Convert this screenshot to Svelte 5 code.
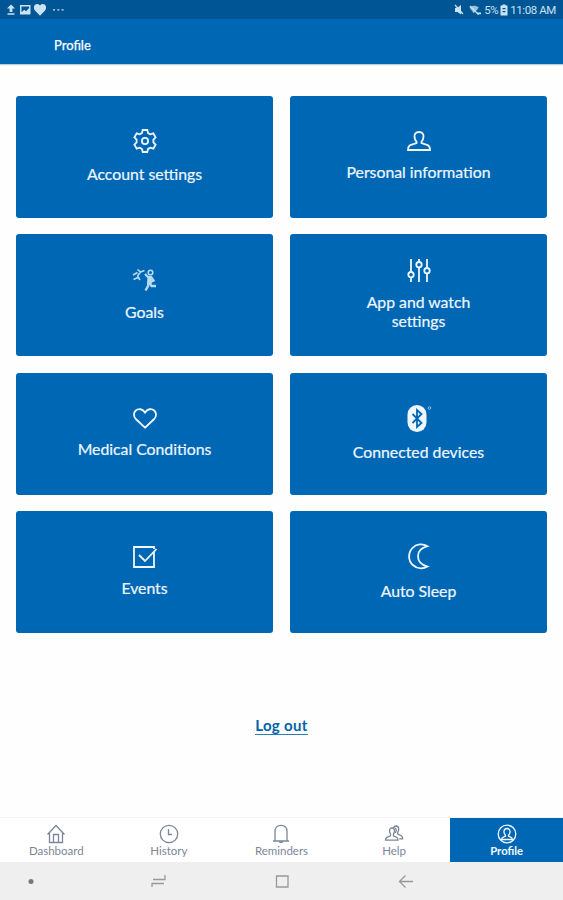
<script lang="ts">
	interface TileI {
		id: string;
		label: string;
	}

	const tiles: TileI[] = [
		{ id: 'account', label: 'Account settings' },
		{ id: 'personal', label: 'Personal information' },
		{ id: 'goals', label: 'Goals' },
		{ id: 'app', label: 'App and watch settings' },
		{ id: 'medical', label: 'Medical Conditions' },
		{ id: 'devices', label: 'Connected devices' },
		{ id: 'events', label: 'Events' },
		{ id: 'sleep', label: 'Auto Sleep' }
	];

	const tabs = ['Dashboard', 'History', 'Reminders', 'Help', 'Profile'];

	let activeTab = 'Profile';
</script>

<div class="screen">
	<div class="status-bar">
		<svg width="65" height="14" viewBox="0 0 65 14">
			<path d="M11 1.500l4 4h-2.600V9H9.600V5.500H7zM7.500 10.300h7v1.400h-7z" />
			<path fill-rule="evenodd" d="M20 2h10.500v9.500H20zM21.500 3.600v5.700l2.700-2.600 1.900 1.500 3-3.300V3.600z" />
			<path d="M40 12.700L34.900 7.400C32.700 4.600 34.300 1 37.200 1c1.300 0 2.200.6 2.800 1.500C40.600 1.600 41.500 1 42.800 1c2.900 0 4.500 3.600 2.300 6.400z" />
			<path d="M53 6.300h2v1.300h-2zM57.300 6.300h2v1.300h-2zM61.600 6.300h2v1.300h-2z" />
		</svg>
		<div class="status-right">
			<svg width="30" height="14" viewBox="0 0 30 14">
				<path d="M1 5h2l4-3v9.500L3.500 9H1z" />
				<path class="slash" d="M1 2l8 9" />
				<path d="M15.500 4.500c3-2.400 6.500-2.400 9.300 0l-1.500 2-3.600 3.700z" opacity=".75" />
				<path class="slash" d="M16 3l8.500 8.500" />
				<path d="M23 9.500h4v1.800h-4z" />
			</svg>
			<span class="percent">5%</span>
			<svg width="8" height="14" viewBox="0 0 8 14">
				<path fill-rule="evenodd" d="M2.500 1.500h3v1H7.500v10H.5v-10h2zM2.500 5v1.200h3V5zM2.500 8v1.200h3V8z" />
			</svg>
			<span class="time">11:08 AM</span>
		</div>
	</div>

	<header>
		<h1>Profile</h1>
	</header>

	<main>
		<div class="tiles">
			{#each tiles as tile}
				<button class="tile {tile.id}">
					{#if tile.id === 'account'}
						<svg width="24" height="24" viewBox="0 0 24 24">
							<path d="M9.700 1h4.600l.8 3.100 2.200 1.200 3-.9 2.300 4L20.400 10.700v2.600l2.200 2.300-2.300 4-3-.9-2.200 1.200-.8 3.100H9.700l-.8-3.100-2.200-1.200-3 .9-2.300-4 2.200-2.300v-2.600L1.400 8.400l2.300-4 3 .9 2.200-1.200z" />
							<circle cx="12" cy="12" r="3.100" />
						</svg>
					{:else if tile.id === 'personal'}
						<svg width="24" height="20" viewBox="0 0 24 20">
							<path d="M12 1C8.700 1 7.300 3 7.500 5.600c.1 2.300.8 4 2 5.100v1.500L4 13.900c-2.200.7-3 2.200-3 5.100h22c0-2.900-.8-4.400-3-5.100l-5.500-1.700v-1.500c1.200-1.100 1.900-2.800 2-5.100C16.700 3 15.300 1 12 1z" />
						</svg>
					{:else if tile.id === 'goals'}
						<svg class="goal-icon" width="26" height="24" viewBox="0 0 26 24">
							<path d="M1 7l4.500-2.500M1.500 11.500L7 9M5.500 1.500l3 2.500M8.500 4L5.500 8M8.500 4l4-1.500M5.500 8L8 12" />
							<circle cx="18.500" cy="4.500" r="2.300" />
							<path class="limbs" d="M13 6l3.500 3.500M19 9l2.500 3.500-3 1.500M16.500 14l-.5 4-2.500 4.500M17.500 14.500l2 3.500h4.500" />
							<path class="body" d="M15.500 8h4.500l-.5 8-4.500.5z" />
						</svg>
					{:else if tile.id === 'app'}
						<svg width="24" height="23" viewBox="0 0 24 23">
							<path d="M4 0v13M4 18.500V23M12 0v3M12 8.500V23M20 0v9M20 14.500V23" />
							<circle cx="4" cy="15.700" r="2.700" />
							<circle cx="12" cy="5.700" r="2.700" />
							<circle cx="20" cy="11.700" r="2.700" />
						</svg>
					{:else if tile.id === 'medical'}
						<svg width="24" height="21" viewBox="0 0 24 21">
							<path d="M12 19.700L2.800 11C.3 8.400.500 4.500 2.800 2.500 5.500.2 9.700.8 12 4.500c2.300-3.700 6.500-4.300 9.200-2 2.300 2 2.500 5.900 0 8.500z" />
						</svg>
					{:else if tile.id === 'devices'}
						<svg width="28" height="27" viewBox="0 0 28 27">
							<rect class="pill" x="2.500" y="0" width="19" height="27" rx="9.500" />
							<path class="rune" d="M7.500 9l9 9-4.500 4V5l4.500 4-9 9" />
							<circle class="mark" cx="24.500" cy="3" r="1.300" />
						</svg>
					{:else if tile.id === 'events'}
						<svg width="26" height="22" viewBox="0 0 26 22">
							<path d="M22 6v15H2V1h20v2" />
							<path d="M7 9l6 6L24.500 3" />
						</svg>
					{:else}
						<svg width="24" height="27" viewBox="0 0 24 27">
							<path d="M20.500 3.200C15.500.2 9.200 1 5.500 5c-4.700 5-4.500 12.500.3 17 4.200 3.800 10 4.200 14.700 1.500C14 21.800 11 18 11 13.200s3.500-8.500 9.500-10z" />
						</svg>
					{/if}
					<span>{tile.label}</span>
				</button>
			{/each}
		</div>

		<a class="logout" href="#logout">Log out</a>
	</main>

	<nav>
		{#each tabs as tab}
			<button class="tab" class:active={tab === activeTab} on:click={() => (activeTab = tab)}>
				<svg width="20" height="20" viewBox="0 0 20 20">
					{#if tab === 'Dashboard'}
						<path d="M1.500 10.500L10 1.500l8.500 9M3.500 8.700v9.800h13V8.700M7.500 18.500v-8h5v8" />
					{:else if tab === 'History'}
						<circle cx="10" cy="10" r="8.700" />
						<path d="M9.500 5v5.500h3.500" />
					{:else if tab === 'Reminders'}
						<path d="M2 17h16M4 17V7.500C4 3.500 6.500 1.300 10 1.300s6 2.200 6 6.200V17M8.500 17.500c0 1.500 3 1.500 3 0" />
					{:else if tab === 'Help'}
						<path d="M1.500 16.200c0-2 .8-2.800 2.300-3.300l2.700-1V10C4.700 6.500 5.500 4 8 4s3.500 2.500 1.500 6v2l2.500.9c1.500.5 2 1.300 2 3.300z" />
						<path d="M9.500 4.300C9.800 2.700 10.700 2 12 2c2.800 0 3.700 3.200 1.700 6.500v1.600l3 1.200c1.600.6 2 1.500 2 3.500h-3.500M10.500 9c2.500-1 2-4 .5-5" />
					{:else}
						<circle cx="10" cy="10" r="8.800" />
						<path d="M4.500 15.500c0-2 1.800-2.300 4-3.300v-1C5.800 8.500 6.800 4.500 10 4.500s4.200 4 1.500 6.700v1c2.200 1 4 1.300 4 3.300z" />
					{/if}
				</svg>
				<span>{tab}</span>
			</button>
		{/each}
	</nav>

	<div class="system-bar">
		<svg width="62" height="37" viewBox="0 0 62 37">
			<circle class="dot" cx="31" cy="19.500" r="2.500" />
		</svg>
		<svg width="18" height="37" viewBox="0 0 18 37">
			<path d="M2 25v-3.500h12M3 17.500h12V13" />
		</svg>
		<svg width="18" height="37" viewBox="0 0 18 37">
			<path d="M3.500 14h11.500v11H3.500z" />
		</svg>
		<svg width="18" height="37" viewBox="0 0 18 37">
			<path d="M16 19.500H3M8.500 13.500l-6 6 6 6" />
		</svg>
	</div>
</div>

<style>
	:global(body) {
		background: #fefefe;
	}

	.screen {
		display: flex;
		flex-direction: column;
		height: 900px;
		font-family: Lato, 'Liberation Sans', sans-serif;
		color: #fff;
	}

	button {
		border: 0;
		padding: 0;
		font-family: inherit;
		color: inherit;
		cursor: pointer;
	}

	svg {
		display: block;
		flex: none;
		fill: none;
		stroke: currentColor;
	}

	.status-bar {
		box-sizing: border-box;
		display: flex;
		align-items: center;
		height: 19px;
		padding-right: 7px;
		background: #005695;
		color: #c9e2f4;
		font: 12px/19px Roboto, sans-serif;
	}
	.status-bar svg {
		fill: currentColor;
		stroke: none;
	}
	.status-bar .slash {
		stroke: currentColor;
		stroke-width: 1.2;
	}
	.status-right {
		display: flex;
		align-items: center;
		margin-left: auto;
	}
	.percent {
		margin: 1px 2px 0 0;
		font-size: 11.5px;
		letter-spacing: -0.5px;
	}
	.time {
		margin: 1px 0 0 2px;
		font-size: 11.5px;
		letter-spacing: -0.4px;
	}

	header {
		display: flex;
		align-items: center;
		height: 45px;
		padding-left: 54px;
		background: #0067b5;
		box-shadow: 0 1px 1px rgba(0, 50, 90, 0.25);
	}
	h1 {
		margin: 6px 0 0;
		font-size: 13px;
		font-weight: 400;
		line-height: 16px;
		-webkit-text-stroke: 0.25px currentColor;
	}

	main {
		display: flex;
		flex: 1;
		flex-direction: column;
		align-items: center;
		padding: 31.5px 16px 0;
	}
	.tiles {
		display: grid;
		grid-template-columns: 1fr 1fr;
		grid-auto-rows: 122px;
		gap: 16.6px 17px;
		width: 100%;
	}
	.tile {
		display: flex;
		flex-direction: column;
		align-items: center;
		justify-content: center;
		gap: 10.5px;
		padding-bottom: 1.5px;
		border-radius: 3px;
		background: #0067b5;
		color: #eef7ff;
		font-size: 15.8px;
		line-height: 19px;
		-webkit-text-stroke: 0.2px currentColor;
	}
	.tile span {
		max-width: 150px;
	}
	.tile.app span {
		max-width: 120px;
	}
	.tile svg {
		stroke-width: 1.8;
	}
	.tile .goal-icon {
		stroke-width: 1.6;
		color: #b5dcf0;
	}
	.goal-icon .limbs {
		stroke-width: 2.4;
	}
	.goal-icon .body,
	.pill {
		fill: currentColor;
		stroke: none;
	}
	.rune {
		stroke: #0067b5;
	}
	.mark {
		stroke: #8cbfe3;
		stroke-width: 1;
	}

	.logout {
		margin-top: 84px;
		border-bottom: 1px solid #2a7cb9;
		color: #0062a8;
		font-size: 15px;
		font-weight: 700;
		letter-spacing: 0.35px;
		line-height: 17px;
		text-decoration: none;
	}

	nav {
		display: grid;
		grid-template-columns: repeat(5, 1fr);
		height: 44px;
		box-shadow: 0 -1px 0 #f3f4f5;
		background: #fff;
	}
	.tab {
		display: flex;
		flex-direction: column;
		align-items: center;
		padding-top: 6px;
		background: none;
		color: #7b8699;
		font-size: 11.5px;
		line-height: 13px;
	}
	.tab svg {
		stroke-width: 1.3;
	}
	.tab.active {
		background: #0067b5;
		color: #f2f9ff;
	}
	.tab.active span {
		font-size: 11.3px;
		font-weight: 700;
	}

	.system-bar {
		display: flex;
		height: 38px;
		background: #efefef;
		color: #999;
	}
	.system-bar svg {
		stroke-width: 1.3;
	}
	.system-bar svg + svg {
		margin-left: 88px;
	}
	.system-bar svg:nth-child(3) {
		margin-left: 105px;
	}
	.system-bar svg:nth-child(4) {
		margin-left: 106px;
	}
	.system-bar .dot {
		fill: #777;
		stroke: none;
	}
</style>
